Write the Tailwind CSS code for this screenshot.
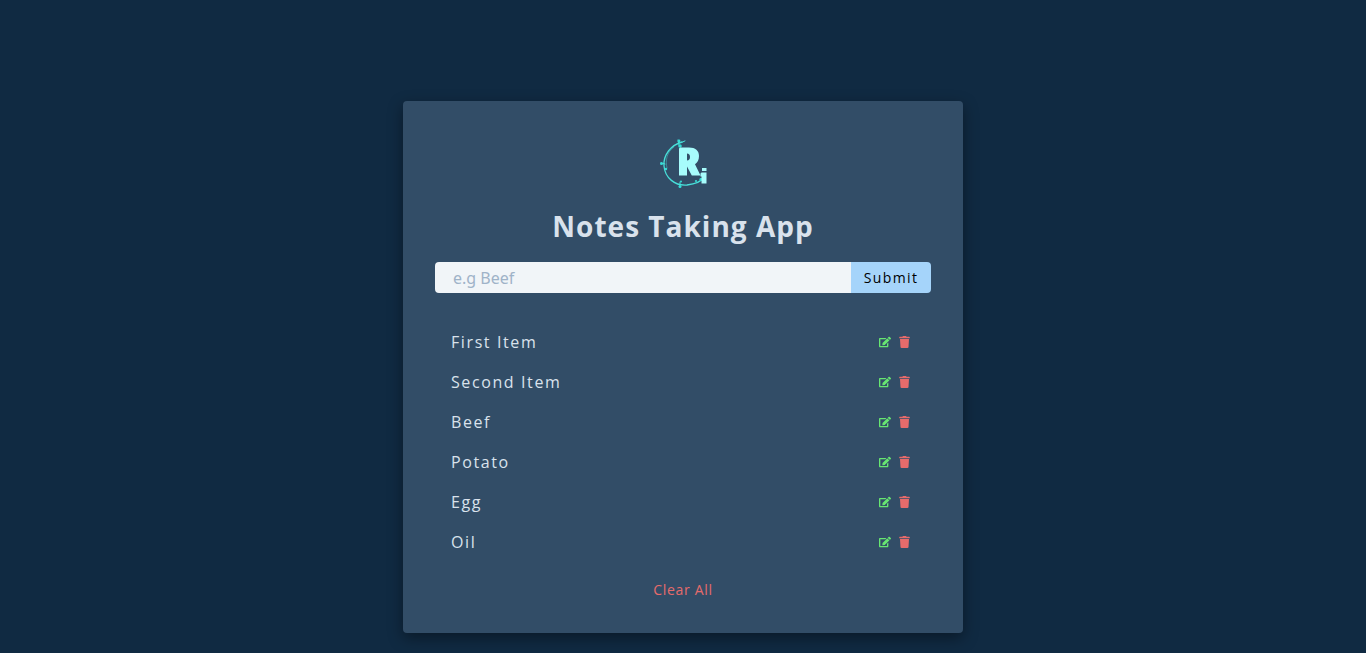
<!DOCTYPE html>
<html lang="en">
<head>
<meta charset="utf-8">
<meta name="viewport" content="width=device-width, initial-scale=1">
<title>Notes Taking App</title>
<script src="https://cdn.jsdelivr.net/npm/@tailwindcss/browser@4"></script>
</head>
<body class="min-h-screen bg-[#102a42] font-['Segoe_UI','Open_Sans',sans-serif] text-[#d9e2ec]">
<svg class="hidden" aria-hidden="true">
  <symbol id="edit" viewBox="0 0 576 512"><path fill="currentColor" d="M402.600 83.200l90.200 90.200c3.800 3.800 3.800 10 0 13.800L274.400 405.600l-92.800 10.300c-12.400 1.400-22.900-9.100-21.500-21.500l10.300-92.800L388.800 83.200c3.800-3.800 10-3.800 13.800 0zm162-22.900l-48.800-48.800c-15.200-15.200-39.900-15.200-55.200 0l-35.400 35.400c-3.800 3.800-3.800 10 0 13.800l90.200 90.200c3.800 3.800 10 3.800 13.800 0l35.400-35.400c15.200-15.300 15.200-40 0-55.200zM384 346.200V448H64V128h229.800c3.200 0 6.200-1.300 8.500-3.500l40-40c7.600-7.600 2.200-20.500-8.500-20.500H48C21.500 64 0 85.500 0 112v352c0 26.500 21.500 48 48 48h352c26.500 0 48-21.500 48-48V306.200c0-10.700-12.900-16-20.500-8.500l-40 40c-2.200 2.300-3.500 5.300-3.500 8.500z"/></symbol>
  <symbol id="trash" viewBox="0 0 448 512"><path fill="currentColor" d="M432 32H312l-9.400-18.700A24 24 0 0 0 281.100 0H166.800a23.700 23.700 0 0 0-21.400 13.300L136 32H16A16 16 0 0 0 0 48v32a16 16 0 0 0 16 16h416a16 16 0 0 0 16-16V48a16 16 0 0 0-16-16zM53.200 467a48 48 0 0 0 47.900 45h245.800a48 48 0 0 0 47.900-45L416 128H32z"/></symbol>
</svg>
<main class="mx-auto w-full max-w-[560px] pt-[101px] pb-5">
  <section class="rounded bg-[#324d67] p-8 shadow-[0_5px_15px_rgba(0,0,0,0.4)]">
    <svg class="mx-auto block size-16" viewBox="1 1 64 64" role="img" aria-label="Ri logo">
      <g fill="none" stroke="#48dfd9" stroke-linecap="round">
        <path d="M32 10C21 13 13 23 14 34C15 46 25 54 37 53C45 52 51 50 55 45" stroke-width="1.300"/>
        <path d="M24 15C17 20 15 28 17 36" stroke-width=".6" opacity=".7"/>
        <path d="M28 10Q31 12 35 9M29 13L28 8M50 47L54 46M11 31L15 32M30 50L30 55" stroke-width="1"/>
      </g>
      <g fill="#35dcd6">
        <circle cx="29" cy="9" r="1.400"/><circle cx="30" cy="14" r="1.800"/><circle cx="11.500" cy="31.500" r="1.500"/><circle cx="16" cy="37" r="1.200"/><circle cx="30" cy="54.500" r="1.500"/><circle cx="31" cy="49.500" r="1"/><circle cx="46" cy="49" r="1.100"/><circle cx="51" cy="47.500" r="1.500"/>
      </g>
      <path fill="#a7fcfc" fill-rule="evenodd" d="M30 15.500H39C45.500 15.500 49 18.500 49 24C49 28 47.500 30.500 45 32.200L50.500 43.500H41.800L37 34.500V43.500H29V16.500ZM37 21.500V28.500C39 28.500 40 27 40 25S39 21.500 37 21.500Z"/>
      <path fill="#a7fcfc" d="M52 36h4.500v3h-4.500zM51.500 40.500H56.500v11h-5v-7h-1v-3z"/>
    </svg>
    <h1 class="mt-2 text-center text-[28px] leading-[42px] font-bold tracking-[1px]">Notes Taking App</h1>
    <form class="mt-[15px] flex h-[31px]">
      <input type="text" aria-label="New note" placeholder="e.g Beef" class="min-w-0 flex-1 rounded-l bg-[#f1f5f8] px-[18px] font-['Noto_Sans',sans-serif] text-base text-[#102a42] outline-none placeholder:text-[#9fb3c8]">
      <button type="submit" class="w-20 rounded-r bg-[#a5d4fa] text-sm tracking-widest text-black">Submit</button>
    </form>
    <ul id="notes" class="mt-[29px] px-4"></ul>
    <div class="mt-4 text-center"><button type="button" class="mx-auto block h-[23px] text-sm leading-[23px] tracking-wider text-[#e66b6b]">Clear All</button></div>
  </section>
</main>
<script>
document.getElementById('notes').innerHTML = ['First Item','Second Item','Beef','Potato','Egg','Oil'].map(n => `
<li class="flex h-10 items-center justify-between">
  <p class="text-base tracking-widest">${n}</p>
  <div class="flex items-center gap-2 pr-[5px]">
    <button type="button" aria-label="Edit ${n}" class="text-[#67e671]"><svg class="block size-3"><use href="#edit"/></svg></button>
    <button type="button" aria-label="Delete ${n}" class="text-[#e66b6b]"><svg class="block h-3 w-[11px]"><use href="#trash"/></svg></button>
  </div>
</li>`).join('');
</script>
</body>
</html>
